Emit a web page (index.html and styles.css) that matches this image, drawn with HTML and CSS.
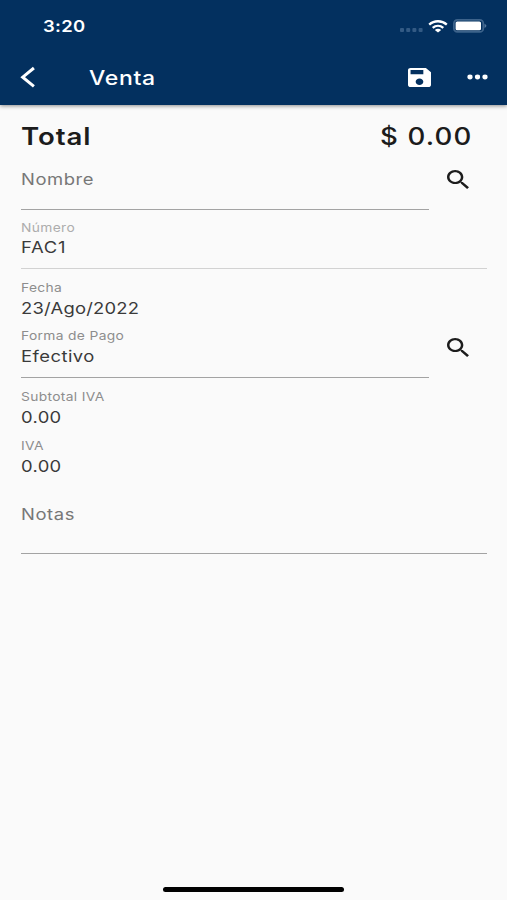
FILE: index.html
```
<!DOCTYPE html>
<html lang="es">

<head>
    <meta charset="UTF-8">
    <meta name="viewport" content="width=device-width, initial-scale=1.0">
    <title>Venta</title>
    <link rel="stylesheet" href="styles.css">
</head>

<body>
    <header>
        <div class="status-bar">
            <span class="wide time">3:20</span>
            <div class="status-icons">
                <svg class="signal" width="24" height="4" viewBox="0 0 24 4" fill="#335a84">
                    <rect x="0" width="4" height="4" rx="1" />
                    <rect x="6.2" width="4" height="4" rx="1" />
                    <rect x="12.4" width="4" height="4" rx="1" />
                    <rect x="18.6" width="4" height="4" rx="1" />
                </svg>
                <svg class="wifi" width="20" height="13" viewBox="0 0 20 13" fill="none" stroke="#fff" stroke-width="2.3">
                    <path d="M1.2 4.7C6.2 .1 13.8 .1 18.8 4.7" />
                    <path d="M4.7 7.8C7.8 5.1 12.2 5.1 15.3 7.8" />
                    <path d="M6.8 9.9Q10 7.8 13.2 9.9L10 12.5Z" fill="#fff" stroke="none" />
                </svg>
                <svg class="battery" width="34" height="14" viewBox="0 0 34 14">
                    <rect x=".9" y=".9" width="29.4" height="12" rx="3.5" fill="none" stroke="#3d638b" stroke-width="1.8" />
                    <rect x="2.6" y="2.5" width="25.4" height="8.8" rx="1.6" fill="#fff" />
                    <path d="M31.5 4.7Q33.4 5.5 33.4 6.8T31.5 8.9Z" fill="#54779b" />
                </svg>
            </div>
        </div>
        <div class="toolbar">
            <svg class="back" width="16" height="22" viewBox="0 0 16 22" fill="none" stroke="#fff" stroke-width="3">
                <path d="M13.9 2L2.7 11.2L13.9 20.4" />
            </svg>
            <h1 class="wide">Venta</h1>
            <svg class="save" width="23" height="19" viewBox="3 3 18 18" preserveAspectRatio="none" fill="#fff">
                <path d="M17 3H5c-1.11 0-2 .9-2 2v14c0 1.1.89 2 2 2h14c1.1 0 2-.9 2-2V7l-4-4zm-5 16c-1.66 0-3-1.34-3-3s1.34-3 3-3 3 1.34 3 3-1.34 3-3 3zm3-10H5V5h10v4z" />
            </svg>
            <svg class="more" width="22" height="6" viewBox="0 0 22 6" fill="#fff">
                <ellipse cx="3" cy="3" rx="2.6" ry="2.4" />
                <ellipse cx="10.5" cy="3" rx="2.6" ry="2.4" />
                <ellipse cx="18" cy="3" rx="2.6" ry="2.4" />
            </svg>
        </div>
    </header>

    <main>
        <div class="total">
            <span class="wide total-label">Total</span>
            <span class="wide total-amount">$ 0.00</span>
        </div>
        <div class="search-row name-row">
            <div class="field underline">
                <span class="wide placeholder">Nombre</span>
            </div>
            <svg class="search" width="22" height="19" viewBox="3 3 17.5 17.5" preserveAspectRatio="none" fill="#1c1c1c">
                <path d="M15.5 14h-.79l-.28-.27C15.41 12.59 16 11.11 16 9.5 16 5.91 13.09 3 9.5 3S3 5.91 3 9.5 5.91 16 9.5 16c1.61 0 3.09-.59 4.23-1.57l.27.28v.79l5 4.99L20.49 19l-4.99-5zm-6 0C7.01 14 5 11.99 5 9.5S7.01 5 9.5 5 14 7.01 14 9.5 11.99 14 9.5 14z" />
            </svg>
        </div>
        <div class="field number underline">
            <span class="wide label disabled">Número</span>
            <span class="wide value">FAC1</span>
        </div>
        <div class="field date">
            <span class="wide label">Fecha</span>
            <span class="wide value">23/Ago/2022</span>
        </div>
        <div class="search-row payment-row">
            <div class="field underline">
                <span class="wide label">Forma de Pago</span>
                <span class="wide value">Efectivo</span>
            </div>
            <svg class="search" width="22" height="19" viewBox="3 3 17.5 17.5" preserveAspectRatio="none" fill="#1c1c1c">
                <path d="M15.5 14h-.79l-.28-.27C15.41 12.59 16 11.11 16 9.5 16 5.91 13.09 3 9.5 3S3 5.91 3 9.5 5.91 16 9.5 16c1.61 0 3.09-.59 4.23-1.57l.27.28v.79l5 4.99L20.49 19l-4.99-5zm-6 0C7.01 14 5 11.99 5 9.5S7.01 5 9.5 5 14 7.01 14 9.5 11.99 14 9.5 14z" />
            </svg>
        </div>
        <div class="field subtotal">
            <span class="wide label">Subtotal IVA</span>
            <span class="wide value">0.00</span>
        </div>
        <div class="field tax">
            <span class="wide label">IVA</span>
            <span class="wide value">0.00</span>
        </div>
        <div class="field notes underline">
            <span class="wide placeholder">Notas</span>
        </div>
    </main>

    <footer>
        <div class="home-indicator"></div>
    </footer>
</body>

</html>
```

FILE: styles.css
```
* {
    box-sizing: border-box;
}

body {
    margin: 0;
    height: 900px;
    display: flex;
    flex-direction: column;
    font-family: Inter, "Liberation Sans", sans-serif;
    background-color: #fafafa;
    color: #3a3a3a;
    overflow: hidden;
}

svg {
    display: block;
    flex: none;
}

.wide {
    display: block;
    width: max-content;
    white-space: nowrap;
    letter-spacing: 0.3px;
    transform: scaleX(1.15);
    transform-origin: left;
}

header {
    height: 105px;
    background-color: #03305f;
    color: #fff;
    box-shadow: 0 1px 4px rgba(0, 0, 0, 0.45);
}

.status-bar {
    height: 52px;
    padding: 0 20px 0 43px;
    display: flex;
    align-items: center;
    justify-content: space-between;
}

.time {
    font-size: 16px;
    font-weight: 600;
}

.status-icons {
    display: flex;
    align-items: center;
}

.signal {
    margin-top: 7px;
}

.wifi {
    margin-left: 4px;
}

.battery {
    margin-left: 5px;
}

.toolbar {
    height: 50px;
    padding: 0 18px 0 20px;
    display: flex;
    align-items: center;
}

h1 {
    margin: 1px auto 0 53px;
    font-size: 20px;
    line-height: 24px;
    font-weight: 500;
}

.wide.total-label,
h1.wide {
    letter-spacing: 0.6px;
}

.save {
    margin-right: 36px;
}

main {
    padding: 20px 20px 0 21px;
    flex: 1;
}

.total {
    height: 46px;
    padding-right: 15px;
    display: flex;
    justify-content: space-between;
    font-size: 24px;
    line-height: 24px;
    font-weight: 600;
    color: #1c1c1c;
}

.wide.total-label {
    letter-spacing: 0.8px;
}

.wide.total-amount {
    font-weight: 500;
    letter-spacing: 1px;
    transform-origin: right;
}

.search-row {
    display: flex;
    justify-content: space-between;
    padding-right: 18px;
}

.search-row .field {
    width: 408px;
}

.search-row .search {
    margin-top: -1px;
}

.underline {
    border-bottom: 1px solid #a3a3a3;
}

.placeholder,
.value {
    font-size: 16px;
    line-height: 20px;
}

.placeholder {
    color: #777;
}

.wide.placeholder {
    letter-spacing: 0.5px;
}

.label {
    font-size: 12px;
    line-height: 14px;
    color: #8d8d8d;
}

.disabled {
    color: #adadad;
}

.name-row .field {
    height: 39px;
}

.name-row .placeholder {
    margin-top: -2px;
}

.number {
    height: 59px;
    padding-top: 11px;
    border-color: #d2d2d2;
}

.number .value {
    margin-top: 2px;
    letter-spacing: 0.7px;
}

.date {
    height: 60px;
    padding-top: 12px;
}

.date .value {
    margin-top: 3px;
    letter-spacing: 0.2px;
}

.payment-row .field {
    height: 49px;
}

.payment-row .value {
    margin-top: 3px;
    letter-spacing: 0.4px;
}

.payment-row .search {
    margin-top: 9px;
}

.subtotal {
    height: 49px;
    padding-top: 12px;
}

.subtotal .value,
.tax .value {
    margin-top: 3px;
}

.tax {
    height: 49px;
    padding-top: 12px;
}

.notes {
    height: 78px;
    padding-top: 28px;
}

footer {
    height: 13px;
    display: flex;
    justify-content: center;
}

.home-indicator {
    width: 181px;
    height: 5px;
    border-radius: 3px;
    background-color: #000;
}
```
